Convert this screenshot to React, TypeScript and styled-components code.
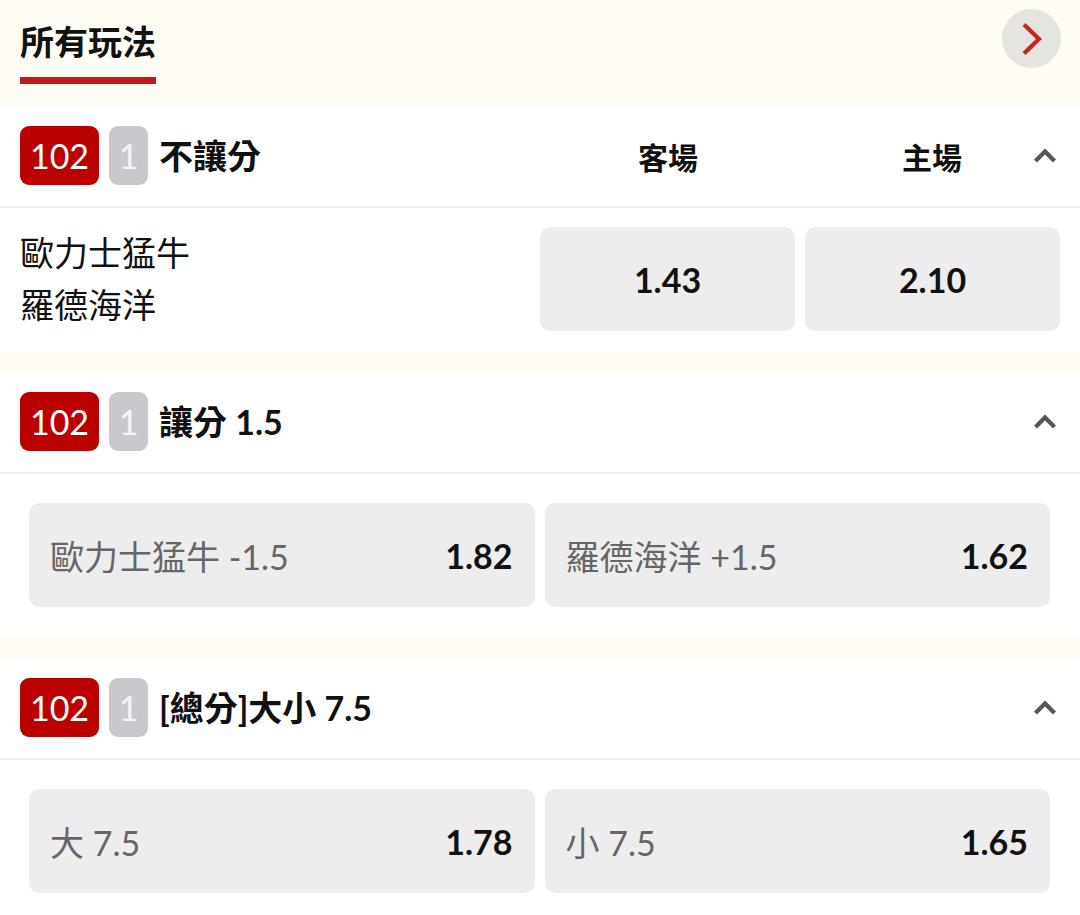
import React from "react";
import styled, { createGlobalStyle } from "styled-components";

const GlobalStyle = createGlobalStyle`
  html, body {
    margin: 0;
    padding: 0;
    background: #fffcf4;
  }
  body {
    font-family: Lato, "Noto Sans CJK TC", "Noto Sans", sans-serif;
    color: #111;
  }
  * { box-sizing: border-box; }
`;

const Page = styled.div`
  width: 1080px;
  background: #fffcf4;
  display: flex;
  flex-direction: column;
  gap: 22px;
  padding-bottom: 22px;
`;

const TopBar = styled.header`
  height: 107px;
  display: flex;
  justify-content: space-between;
  align-items: flex-start;
  padding: 0 20px;
  margin-bottom: -22px;
`;

const Tab = styled.div`
  display: flex;
  flex-direction: column;
  padding-top: 19px;
`;

const TabLabel = styled.span`
  font-size: 34px;
  line-height: 46px;
  font-weight: 700;
  color: #111;
`;

const TabLine = styled.span`
  margin-top: 12px;
  height: 7px;
  background: #c4161c;
`;

const CircleButton = styled.button`
  margin-top: 9px;
  width: 59px;
  height: 59px;
  border-radius: 50%;
  border: none;
  background: #e6e4df;
  display: flex;
  align-items: center;
  justify-content: center;
  padding: 0;
  margin-right: -1px;
`;

const Section = styled.section`
  background: #fff;
  display: flex;
  flex-direction: column;
`;

const SectionHeader = styled.div`
  height: 101px;
  border-bottom: 2px solid #f0f0f0;
  display: flex;
  align-items: center;
  padding: 0 23px 2px 20px;
`;

const TitleGroup = styled.div`
  flex: 1;
  display: flex;
  align-items: center;
`;

const Badge = styled.span<{ $tone: "red" | "grey" }>`
  height: 59px;
  min-width: ${(p) => (p.$tone === "red" ? "79px" : "39px")};
  border-radius: 9px;
  display: inline-flex;
  align-items: center;
  justify-content: center;
  background: ${(p) => (p.$tone === "red" ? "#bb0000" : "#c9c9cd")};
  color: ${(p) => (p.$tone === "red" ? "#fff" : "#f4f4f4")};
  font-family: Lato, sans-serif;
  font-size: 34px;
  font-weight: 400;
  margin-right: 10px;
`;

const Title = styled.span`
  margin-left: 1px;
  font-size: 34px;
  font-weight: 700;
  color: #111;
  line-height: 1;
`;

const ColLabel = styled.span<{ $gapAfter: number }>`
  width: 130px;
  text-align: center;
  font-size: 30px;
  font-weight: 700;
  color: #111;
  margin-right: ${(p) => p.$gapAfter}px;
`;

const FullRow = styled.div`
  display: flex;
  align-items: center;
  padding: 19px 20px 20px 20px;
`;

const Teams = styled.div`
  flex: 1;
  display: flex;
  flex-direction: column;
  font-size: 34px;
  line-height: 52px;
  color: #111;
`;

const OddsButtons = styled.div`
  display: flex;
  gap: 10px;
`;

const OddsBox = styled.button`
  width: 255px;
  height: 104px;
  border: none;
  border-radius: 10px;
  background: #ededed;
  display: flex;
  align-items: center;
  justify-content: center;
  font-family: Lato, sans-serif;
  font-size: 34px;
  font-weight: 700;
  color: #111;
  padding: 0;
`;

const PairRow = styled.div`
  display: flex;
  gap: 10px;
  padding: 29px 30px 30px 29px;
`;

const PickBox = styled.button`
  flex: 1;
  height: 104px;
  border: none;
  border-radius: 10px;
  background: #ededed;
  display: flex;
  align-items: center;
  justify-content: space-between;
  padding: 0 22px 0 21px;
  font-family: Lato, "Noto Sans CJK TC", sans-serif;
`;

const PickLabel = styled.span`
  font-size: 34px;
  color: #666;
  font-weight: 400;
`;

const PickOdds = styled.span`
  font-size: 34px;
  color: #111;
  font-weight: 700;
`;

const ChevronUp = () => (
  <svg width="24" height="16" viewBox="0 0 24 16">
    <polyline
      points="2.5,13 12,3.5 21.5,13"
      fill="none"
      stroke="#555"
      strokeWidth="4.2"
      strokeLinejoin="miter"
    />
  </svg>
);

const ChevronRight = () => (
  <svg width="22" height="34" viewBox="0 0 22 34">
    <polyline
      points="3,2.5 18,17 3,31.5"
      fill="none"
      stroke="#c4261f"
      strokeWidth="4.2"
      strokeLinejoin="miter"
    />
  </svg>
);

const Head = ({ title }: { title: string }) => (
  <TitleGroup>
    <Badge $tone="red">102</Badge>
    <Badge $tone="grey">1</Badge>
    <Title>{title}</Title>
  </TitleGroup>
);

const pairs = [
  {
    title: "讓分 1.5",
    picks: [
      { label: "歐力士猛牛 -1.5", odds: "1.82" },
      { label: "羅德海洋 +1.5", odds: "1.62" },
    ],
  },
  {
    title: "[總分]大小 7.5",
    picks: [
      { label: "大 7.5", odds: "1.78" },
      { label: "小 7.5", odds: "1.65" },
    ],
  },
];

export default function App() {
  return (
    <>
      <GlobalStyle />
      <Page>
        <TopBar>
          <Tab>
            <TabLabel>所有玩法</TabLabel>
            <TabLine />
          </Tab>
          <CircleButton aria-label="next">
            <ChevronRight />
          </CircleButton>
        </TopBar>

        <Section>
          <SectionHeader>
            <Head title="不讓分" />
            <ColLabel $gapAfter={134}>客場</ColLabel>
            <ColLabel $gapAfter={36}>主場</ColLabel>
            <ChevronUp />
          </SectionHeader>
          <FullRow>
            <Teams>
              <span>歐力士猛牛</span>
              <span>羅德海洋</span>
            </Teams>
            <OddsButtons>
              <OddsBox>1.43</OddsBox>
              <OddsBox>2.10</OddsBox>
            </OddsButtons>
          </FullRow>
        </Section>

        {pairs.map((s) => (
          <Section key={s.title}>
            <SectionHeader>
              <Head title={s.title} />
              <ChevronUp />
            </SectionHeader>
            <PairRow>
              {s.picks.map((p) => (
                <PickBox key={p.label}>
                  <PickLabel>{p.label}</PickLabel>
                  <PickOdds>{p.odds}</PickOdds>
                </PickBox>
              ))}
            </PairRow>
          </Section>
        ))}
      </Page>
    </>
  );
}
